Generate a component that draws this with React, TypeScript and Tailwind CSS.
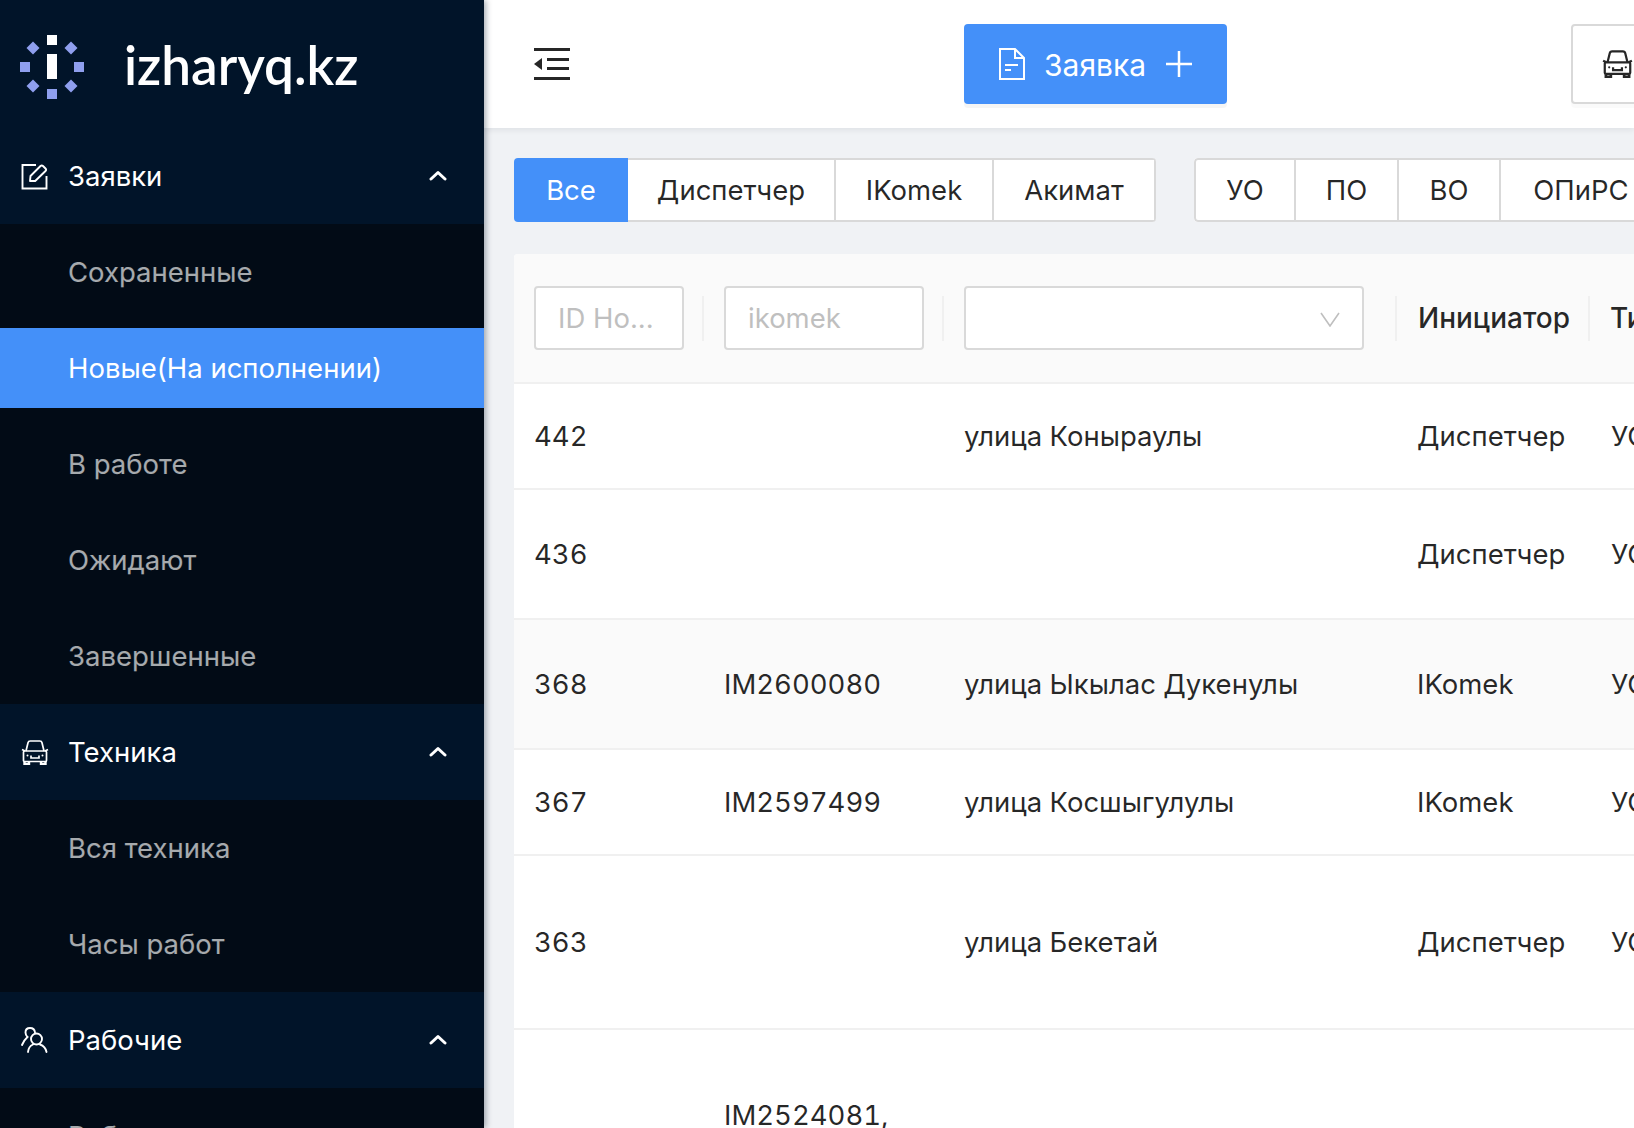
import React from 'react';

const LogoMark = () => (
  <svg width="64" height="64" viewBox="0 0 64 64" className="shrink-0">
    <rect x="27" y="0" width="10" height="10" fill="#fff" />
    <rect x="27" y="19" width="10" height="25" fill="#fff" />
    <rect x="0" y="27" width="10" height="10" fill="#8f9fee" />
    <rect x="54" y="27" width="10" height="10" fill="#8f9fee" />
    <rect x="27" y="54" width="10" height="10" fill="#8f9fee" />
    <polygon points="13,6.5 19.5,13 13,19.5 6.5,13" fill="#8f9fee" />
    <polygon points="51,6.5 57.5,13 51,19.5 44.5,13" fill="#8f9fee" />
    <polygon points="13,44.5 19.5,51 13,57.5 6.5,51" fill="#8f9fee" />
    <polygon points="51,44.5 57.5,51 51,57.5 44.5,51" fill="#8f9fee" />
  </svg>
);

const EditIcon = () => (
  <svg width="27" height="27" viewBox="0 0 27 27" fill="none" stroke="currentColor" strokeWidth="1.9">
    <path d="M15 2H1.5V25.5H25.5V13" />
    <path d="M9 18L9.5 13L19.5 3Q20.7 1.8 22 3L24.5 5.5Q25.7 6.8 24.5 8L14.2 18Z" strokeLinejoin="round" />
  </svg>
);

const CarIcon = ({ width = 28, height = 25, stroke = 1.7 }: { width?: number; height?: number; stroke?: number }) => (
  <svg width={width} height={height} viewBox="0 0 28 25" fill="none" stroke="currentColor" strokeWidth={stroke}>
    <path d="M5 11L7 2.8Q7.4 1 9.2 1H18.8Q20.6 1 21 2.8L23 11" />
    <rect x="2.5" y="11" width="23" height="10.5" rx="1" />
    <path d="M1 9.5L4 11M27 9.5L24 11" />
    <path d="M3.5 22V24H8V22M20 22V24H24.5V22" strokeWidth="2.4" />
    <path d="M10 15.5V18H18V15.5" />
    <circle cx="6.5" cy="15.5" r="1" fill="currentColor" stroke="none" />
    <circle cx="21.5" cy="15.5" r="1" fill="currentColor" stroke="none" />
  </svg>
);

const UsersIcon = () => (
  <svg width="27" height="26" viewBox="0 0 27 26" fill="none" stroke="currentColor" strokeWidth="1.9" strokeLinecap="round">
    <circle cx="15.5" cy="12" r="5.5" />
    <path d="M7 25Q7.5 19.5 12 17.5M19 17.5Q24.5 19.5 25.5 25" />
    <path d="M14 5.5Q13.5 1 9 1Q4.5 1 4.5 5.5Q4.5 8 6.5 10Q3.5 12.5 1 18" />
  </svg>
);

const Chevron = () => (
  <svg width="18" height="11" viewBox="0 0 18 11" fill="none" stroke="#fff" strokeWidth="3" strokeLinecap="round" strokeLinejoin="round">
    <path d="M2 9L9 2.5L16 9" />
  </svg>
);

const MenuHeader = ({ icon, label }: { icon: React.ReactNode; label: string }) => (
  <div className="h-[96px] flex items-center bg-[#011429] text-white text-[27.5px]">
    <span className="w-[68px] pl-[21px] shrink-0 flex">{icon}</span>
    <span className="flex-1 pt-[2px]">{label}</span>
    <span className="pr-[37px] pb-[2px] flex">
      <Chevron />
    </span>
  </div>
);

const MenuItem = ({ label, active }: { label: string; active?: boolean }) => (
  <div className="h-[96px] py-2">
    <div className={'h-full pl-[68px] pt-[2px] flex items-center text-[27.5px] ' + (active ? 'bg-[#4490f9] text-white' : 'text-white/65')}>
      {label}
    </div>
  </div>
);

const Sidebar = () => (
  <aside className="w-[484px] h-full shrink-0 overflow-hidden bg-[#020b16] relative z-20 shadow-[2px_0_6px_rgba(0,21,41,0.35)]">
    <div className="h-[128px] bg-[#011429] flex items-center pl-[20px] pt-[6px]">
      <LogoMark />
      <span className="ml-[40px] -mt-[5px] font-['Lato'] font-semibold text-[53px] leading-none text-white">izharyq.kz</span>
    </div>
    <MenuHeader icon={<EditIcon />} label="Заявки" />
    <MenuItem label="Сохраненные" />
    <MenuItem label="Новые(На исполнении)" active />
    <MenuItem label="В работе" />
    <MenuItem label="Ожидают" />
    <MenuItem label="Завершенные" />
    <MenuHeader icon={<CarIcon />} label="Техника" />
    <MenuItem label="Вся техника" />
    <MenuItem label="Часы работ" />
    <MenuHeader icon={<UsersIcon />} label="Рабочие" />
    <MenuItem label="Рабочие" />
  </aside>
);

const TopBar = () => (
  <header className="h-[128px] shrink-0 bg-white flex items-start relative z-10 shadow-[0_2px_6px_rgba(0,21,41,0.08)]">
    <div className="pl-[50px] pt-[48px] w-[480px] shrink-0">
      <svg width="36" height="32" viewBox="0 0 36 32" fill="#262626" className="block">
        <rect x="0" y="0" width="36" height="3" />
        <rect x="13" y="10" width="22" height="3" />
        <rect x="13" y="19" width="22" height="3" />
        <rect x="0" y="29" width="36" height="3" />
        <polygon points="0,16 8,10 8,22" />
      </svg>
    </div>
    <button className="mt-[24px] h-[80px] w-[263px] shrink-0 rounded-[4px] bg-[#4490f9] text-white text-[30px] flex items-center pl-[35px] shadow-[0_4px_0_rgba(0,0,0,0.04)]">
      <svg width="26" height="32" viewBox="0 0 26 32" fill="none" stroke="#fff" strokeWidth="2">
        <path d="M1 1H16L25 10V31H1Z" />
        <path d="M16 1V10H25" />
        <path d="M6 17H19M6 22H12" />
      </svg>
      <span className="ml-[19px] pt-[2px]">Заявка</span>
      <svg width="26" height="26" viewBox="0 0 26 26" stroke="#fff" strokeWidth="2.5" className="ml-[20px]">
        <path d="M13 0V26M0 13H26" />
      </svg>
    </button>
    <button className="ml-[344px] mt-[24px] h-[80px] w-[200px] shrink-0 rounded-[4px] bg-white border-2 border-[#d9d9d9] flex items-center pl-[29px] text-[#262626] shadow-[0_4px_0_rgba(0,0,0,0.02)]">
      <CarIcon width={31} height={28} stroke={2} />
    </button>
  </header>
);

type Tab = { label: string; w: string; active?: boolean };

const groupOne: Tab[] = [
  { label: 'Все', w: 'w-[114px]', active: true },
  { label: 'Диспетчер', w: 'w-[208px]' },
  { label: 'IKomek', w: 'w-[158px]' },
  { label: 'Акимат', w: 'w-[162px]' },
];
const groupTwo: Tab[] = [
  { label: 'УО', w: 'w-[102px]' },
  { label: 'ПО', w: 'w-[103px]' },
  { label: 'ВО', w: 'w-[102px]' },
  { label: 'ОПиРС', w: 'w-[162px]' },
];

const TabGroup = ({ tabs }: { tabs: Tab[] }) => (
  <div className="flex shrink-0 h-[64px] rounded-[4px] overflow-hidden bg-white">
    {tabs.map((t, i) => (
      <div
        key={t.label}
        className={
          t.w +
          ' flex items-center justify-center pt-[2px] text-[27.5px] ' +
          (t.active
            ? 'bg-[#4490f9] text-white'
            : 'text-[#000000d9] border-y-2 border-r-2 border-[#d9d9d9] rounded-none ' + (i === 0 ? 'border-l-2 rounded-l-[4px]' : ''))
        }
      >
        {t.label}
      </div>
    ))}
  </div>
);

const gridCols = 'grid grid-cols-[190px_240px_453px_193px_1fr]';

const inputBox = 'h-[64px] rounded-[4px] border-2 border-[#d9d9d9] bg-white flex items-center pt-[2px] text-[27.5px] text-[#bfbfbf]';

const HeaderCell = ({ children, divider }: { children: React.ReactNode; divider?: boolean }) => (
  <div className="relative px-[20px] flex items-center">
    {children}
    {divider && <span className="absolute right-0 top-[42px] h-[45px] w-[2px] bg-[#f0f0f0]" />}
  </div>
);

const TableHead = () => (
  <div className={gridCols + ' h-[130px] bg-[#fafafa] border-b-2 border-[#f0f0f0]'}>
    <HeaderCell divider>
      <div className={inputBox + ' w-[150px] pl-[22px]'}>ID Но...</div>
    </HeaderCell>
    <HeaderCell divider>
      <div className={inputBox + ' w-[200px] pl-[22px]'}>ikomek</div>
    </HeaderCell>
    <HeaderCell divider>
      <div className={inputBox + ' w-[400px] justify-end pr-[22px]'}>
        <svg width="20" height="15" viewBox="0 0 20 15" fill="none" stroke="#bfbfbf" strokeWidth="1.6">
          <path d="M1 1L10 14L19 1" />
        </svg>
      </div>
    </HeaderCell>
    <HeaderCell divider>
      <span className="ml-[1px] font-medium text-[28px] text-[#000000d9] whitespace-nowrap">Инициатор</span>
    </HeaderCell>
    <HeaderCell>
      <span className="font-medium text-[28px] text-[#000000d9] whitespace-nowrap">Тип</span>
    </HeaderCell>
  </div>
);

const rows = [
  { id: '442', im: '', addr: 'улица Коныраулы', from: 'Диспетчер', h: 'h-[106px]' },
  { id: '436', im: '', addr: '', from: 'Диспетчер', h: 'h-[130px]' },
  { id: '368', im: 'IM2600080', addr: 'улица Ыкылас Дукенулы', from: 'IKomek', h: 'h-[130px]', hover: true },
  { id: '367', im: 'IM2597499', addr: 'улица Косшыгулулы', from: 'IKomek', h: 'h-[106px]' },
  { id: '363', im: '', addr: 'улица Бекетай', from: 'Диспетчер', h: 'h-[174px]' },
];

const Row = ({ r }: { r: (typeof rows)[number] }) => (
  <div className={gridCols + ' items-center border-b-2 border-[#f0f0f0] pt-[2px] text-[27.5px] tabular-nums text-[#000000d9] ' + r.h + (r.hover ? ' bg-[#fafafa]' : '')}>
    <div className="px-[20px]">{r.id}</div>
    <div className="px-[20px]">{r.im}</div>
    <div className="px-[20px]">{r.addr}</div>
    <div className="px-[20px]">{r.from}</div>
    <div className="px-[21px] whitespace-nowrap">УО</div>
  </div>
);

const Table = () => (
  <div className="mt-[32px] w-[1240px] bg-white rounded-t-[4px] overflow-hidden">
    <TableHead />
    {rows.map((r) => (
      <Row key={r.id} r={r} />
    ))}
    <div className={gridCols + ' items-center h-[214px] text-[27.5px] tabular-nums text-[#000000d9]'}>
      <div className="px-[20px] pt-[10px]">135</div>
      <div className="px-[20px] leading-[44px]">
        IM2524081,
        <br />
        IM2524090
      </div>
      <div className="px-[20px] pt-[10px]">улица Керей Жанибек хандар</div>
      <div className="px-[20px] pt-[10px]">IKomek</div>
      <div className="px-[21px] pt-[10px] whitespace-nowrap">УО</div>
    </div>
  </div>
);

export default function App() {
  return (
    <div className="w-[1634px] h-[1128px] overflow-hidden flex bg-[#f0f2f5] font-['Inter',sans-serif]">
      <Sidebar />
      <main className="flex-1 min-w-0 flex flex-col overflow-hidden">
        <TopBar />
        <div className="pl-[30px] pt-[30px] flex flex-col">
          <div className="flex gap-[38px]">
            <TabGroup tabs={groupOne} />
            <TabGroup tabs={groupTwo} />
          </div>
          <Table />
        </div>
      </main>
    </div>
  );
}
